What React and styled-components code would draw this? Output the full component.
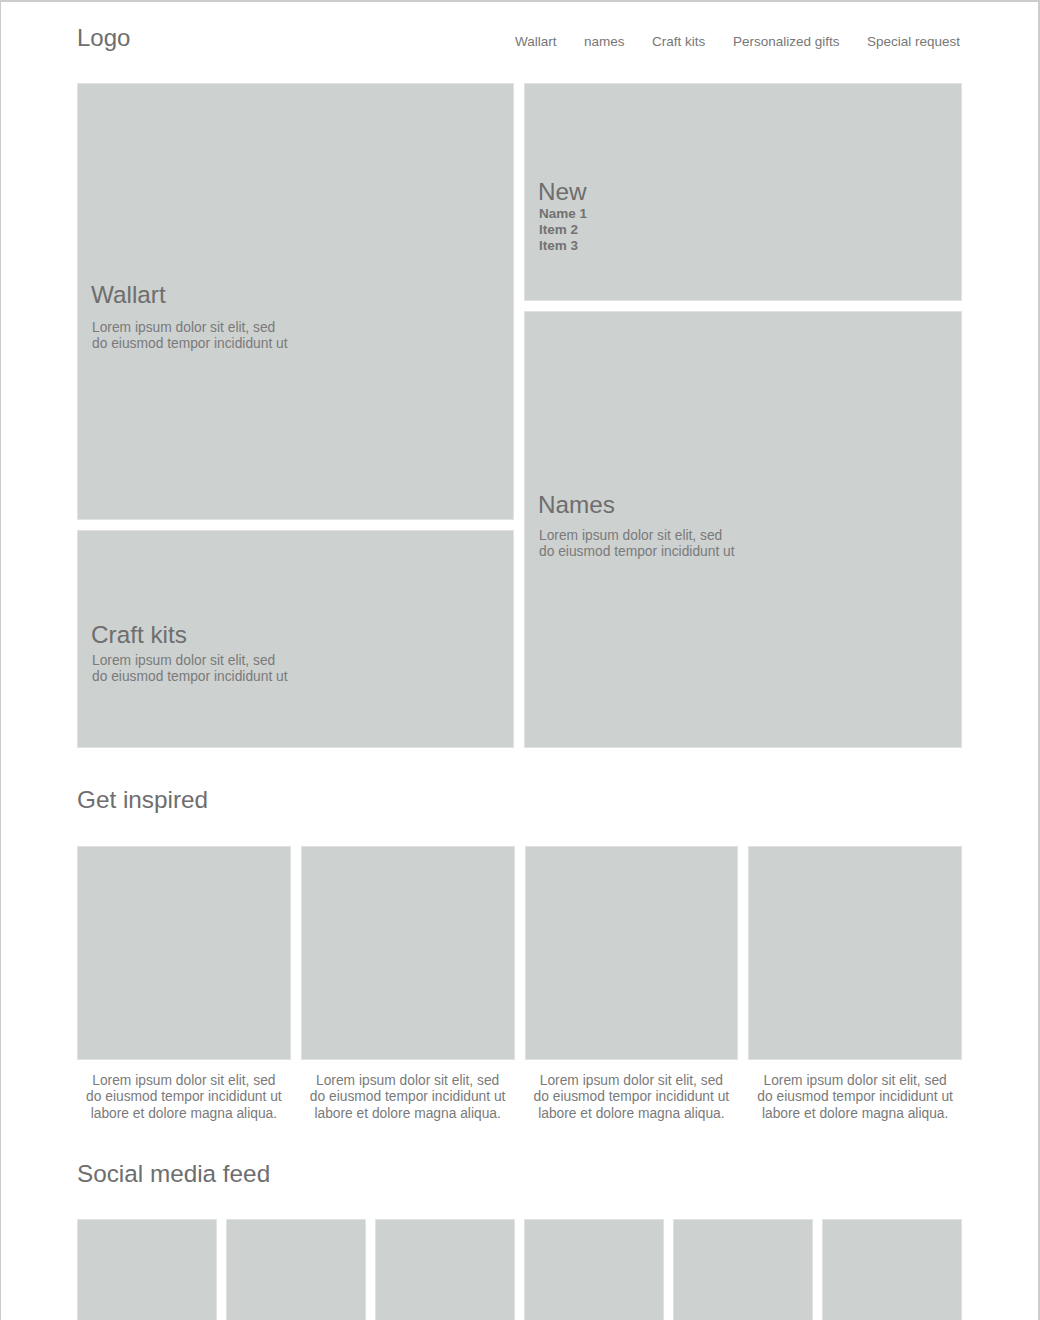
import React from "react";
import styled, { createGlobalStyle } from "styled-components";

const GlobalStyle = createGlobalStyle`
  * { box-sizing: border-box; }
  html, body { margin: 0; padding: 0; background: #ffffff; }
  body { font-family: "Liberation Sans", Arial, sans-serif; }
`;

const Frame = styled.div`
  width: 1040px;
  min-height: 1320px;
  border-top: 2px solid #cccccc;
  border-left: 1px solid #cccccc;
  border-right: 2px solid #cccccc;
  padding: 0 76px 40px 76px;
`;

const Header = styled.header`
  height: 81px;
  padding-top: 22px;
  display: flex;
  justify-content: space-between;
  align-items: baseline;
`;

const Logo = styled.div`
  font-size: 24px;
  line-height: 28px;
  color: #6e6e6e;
`;

const Nav = styled.nav`
  display: flex;
  gap: 27.5px;
  padding-right: 2px;
`;

const NavLink = styled.a`
  font-size: 13.5px;
  line-height: 16px;
  color: #777777;
  text-decoration: none;
`;

const HeroGrid = styled.section`
  display: grid;
  grid-template-columns: 437px 438px;
  grid-template-rows: 218px 209px 218px;
  gap: 10px;
`;

const Tile = styled.div`
  background: #cdd1d0;
  border: 1px solid #e0e2e1;
  grid-column: ${(p) => p.$col};
  grid-row: ${(p) => p.$row};
  padding: ${(p) => p.$top}px 14px 0 13px;
  display: flex;
  flex-direction: column;
`;

const TileTitle = styled.h2`
  margin: 0 0 ${(p) => p.$gap}px 0;
  font-size: 24.3px;
  line-height: 28px;
  font-weight: normal;
  color: #6e6e6e;
`;

const TileText = styled.p`
  margin: 0;
  padding-left: 1px;
  font-size: 13.8px;
  line-height: 16px;
  color: #7a7a7a;
`;

const ItemList = styled.ul`
  list-style: none;
  margin: 0;
  padding: 0 0 0 1px;
`;

const Item = styled.li`
  font-size: 13.5px;
  line-height: 16px;
  font-weight: bold;
  color: #727272;
`;

const SectionTitle = styled.h2`
  margin: 38px 0 ${(p) => p.$after}px 0;
  font-size: 24.3px;
  line-height: 28px;
  font-weight: normal;
  color: #6e6e6e;
`;

const InspireGrid = styled.div`
  display: grid;
  grid-template-columns: repeat(4, 1fr);
  column-gap: 10px;
`;

const InspireCard = styled.div`
  display: flex;
  flex-direction: column;
`;

const Square = styled.div`
  aspect-ratio: 1 / 1;
  background: #cdd1d0;
  border: 1px solid #e0e2e1;
`;

const Caption = styled.p`
  margin: 13px 0 0 0;
  text-align: center;
  font-size: 13.8px;
  line-height: 16.5px;
  color: #7a7a7a;
`;

const SocialGrid = styled.div`
  display: grid;
  grid-template-columns: repeat(6, 1fr);
  gap: 9px;
`;

const lorem2 = (
  <>
    Lorem ipsum dolor sit elit, sed
    <br />
    do eiusmod tempor incididunt ut
  </>
);

const navItems = ["Wallart", "names", "Craft kits", "Personalized gifts", "Special request"];

export default function App() {
  return (
    <>
      <GlobalStyle />
      <Frame>
        <Header>
          <Logo>Logo</Logo>
          <Nav>
            {navItems.map((n) => (
              <NavLink key={n} href="#">
                {n}
              </NavLink>
            ))}
          </Nav>
        </Header>

        <HeroGrid>
          <Tile $col="1" $row="1 / span 2" $top={197}>
            <TileTitle $gap={11}>Wallart</TileTitle>
            <TileText>{lorem2}</TileText>
          </Tile>
          <Tile $col="2" $row="1" $top={94}>
            <TileTitle $gap={0}>New</TileTitle>
            <ItemList>
              <Item>Name 1</Item>
              <Item>Item 2</Item>
              <Item>Item 3</Item>
            </ItemList>
          </Tile>
          <Tile $col="1" $row="3" $top={90}>
            <TileTitle $gap={4}>Craft kits</TileTitle>
            <TileText>{lorem2}</TileText>
          </Tile>
          <Tile $col="2" $row="2 / span 2" $top={179}>
            <TileTitle $gap={9}>Names</TileTitle>
            <TileText>{lorem2}</TileText>
          </Tile>
        </HeroGrid>

        <SectionTitle $after={32}>Get inspired</SectionTitle>
        <InspireGrid>
          {[0, 1, 2, 3].map((i) => (
            <InspireCard key={i}>
              <Square />
              <Caption>
                Lorem ipsum dolor sit elit, sed
                <br />
                do eiusmod tempor incididunt ut
                <br />
                labore et dolore magna aliqua.
              </Caption>
            </InspireCard>
          ))}
        </InspireGrid>

        <SectionTitle $after={31}>Social media feed</SectionTitle>
        <SocialGrid>
          {[0, 1, 2, 3, 4, 5].map((i) => (
            <Square key={i} />
          ))}
        </SocialGrid>
      </Frame>
    </>
  );
}
